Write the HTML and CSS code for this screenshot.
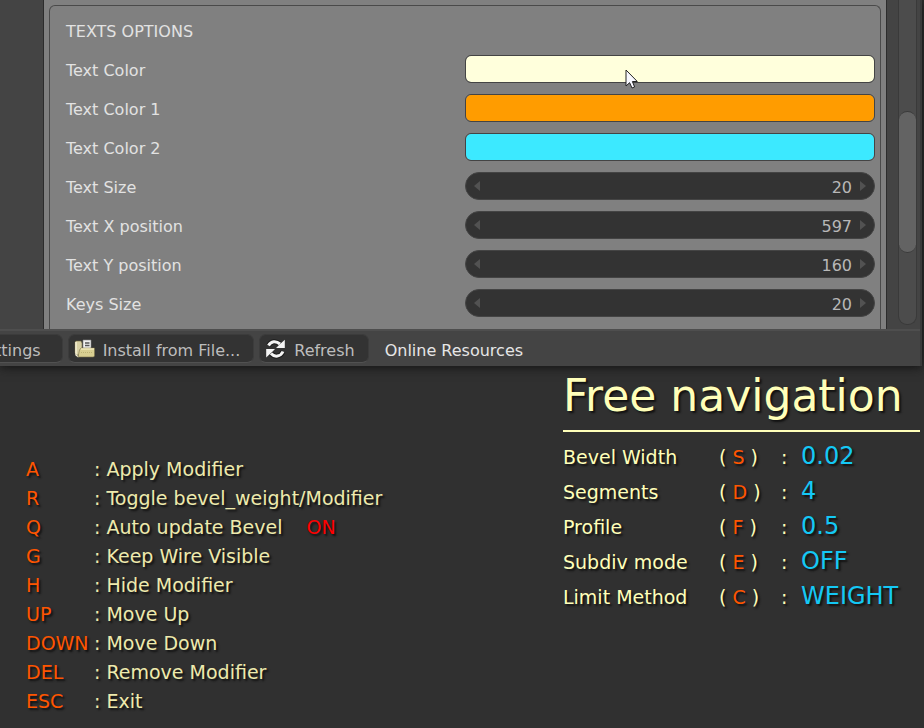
FILE: index.html
```html
<!DOCTYPE html>
<html lang="en">
<head>
<meta charset="UTF-8">
<meta name="viewport" content="width=device-width, initial-scale=1.0">
<title>Texts Options</title>
<link rel="stylesheet" href="styles.css">
</head>
<body>

<div class="window">
    <div class="prefs">
        <div class="panel">
            <form class="options">
                <h2>TEXTS OPTIONS</h2>
                <div class="row">
                    <label for="textColor">Text Color</label>
                    <div class="swatch">
                        <input type="color" id="textColor" value="#ffffdc">
                        <svg class="cursor" width="14" height="21" viewBox="0 0 14 21">
                            <path d="M1 1 V17 L4.600 13.700 L7 19 L9.600 18 L7.400 12.500 H12.300 Z" fill="#f8f8ff" stroke="#222" stroke-width="1"/>
                        </svg>
                    </div>
                </div>
                <div class="row">
                    <label for="textColor1">Text Color 1</label>
                    <div class="swatch"><input type="color" id="textColor1" value="#ff9c00"></div>
                </div>
                <div class="row">
                    <label for="textColor2">Text Color 2</label>
                    <div class="swatch"><input type="color" id="textColor2" value="#3ce9ff"></div>
                </div>
                <div class="row">
                    <label for="textSize">Text Size</label>
                    <div class="number">
                        <button type="button" class="step prev" aria-label="Decrease"></button>
                        <input type="text" id="textSize" value="20">
                        <button type="button" class="step next" aria-label="Increase"></button>
                    </div>
                </div>
                <div class="row">
                    <label for="textX">Text X position</label>
                    <div class="number">
                        <button type="button" class="step prev" aria-label="Decrease"></button>
                        <input type="text" id="textX" value="597">
                        <button type="button" class="step next" aria-label="Increase"></button>
                    </div>
                </div>
                <div class="row">
                    <label for="textY">Text Y position</label>
                    <div class="number">
                        <button type="button" class="step prev" aria-label="Decrease"></button>
                        <input type="text" id="textY" value="160">
                        <button type="button" class="step next" aria-label="Increase"></button>
                    </div>
                </div>
                <div class="row">
                    <label for="keysSize">Keys Size</label>
                    <div class="number">
                        <button type="button" class="step prev" aria-label="Decrease"></button>
                        <input type="text" id="keysSize" value="20">
                        <button type="button" class="step next" aria-label="Increase"></button>
                    </div>
                </div>
            </form>
        </div>
        <div class="scrollbar"><div class="thumb"></div></div>
    </div>

    <div class="toolbar">
        <button type="button" class="btn btn-cut"><span>ttings</span></button>
        <button type="button" class="btn">
            <svg width="22" height="20" viewBox="0 0 22 20">
                <path d="M1 3 L2 2 H7 L8 4 V16 H3 L1 14 Z" fill="#d8d0a4" stroke="#6b6340" stroke-width="0.600"/>
                <path d="M9 1 H17 V12 H9 Z" fill="#f0f0f0" stroke="#888" stroke-width="0.600"/>
                <path d="M11 4 H15.500 M11 6.500 H15.500" stroke="#555" stroke-width="1.300"/>
                <path d="M2 3 V16 L4.500 18" fill="none" stroke="#f7f3d8" stroke-width="1.400"/>
                <path d="M5.500 11 L7 9 H20.500 V17 L19.500 18 H4 Z" fill="#d9cf92" stroke="#79704a" stroke-width="0.600"/>
                <path d="M7 10 H20" stroke="#f5efc4" stroke-width="1.200"/>
                <path d="M7 13.500 H19" stroke="#bcb274" stroke-width="1" stroke-dasharray="1 1"/>
            </svg>
            <span>Install from File...</span>
        </button>
        <button type="button" class="btn">
            <svg width="22" height="20" viewBox="0 0 22 20">
                <g fill="none" stroke="#1c1c1c" stroke-width="5">
                    <path d="M3.500 6.500 C6 2 11 1.500 15 5"/>
                    <path d="M18 12.500 C15.500 18 9.500 18.500 6 14.500"/>
                </g>
                <g fill="none" stroke="#f4f4f4" stroke-width="3">
                    <path d="M3.500 6.500 C6 2 11 1.500 15 5"/>
                    <path d="M18 12.500 C15.500 18 9.500 18.500 6 14.500"/>
                </g>
                <path d="M19.800 0.800 V9 H11 L14 6 Z M1.200 18.500 V10 H10 L7 13 Z" fill="#f4f4f4"/>
            </svg>
            <span>Refresh</span>
        </button>
        <a href="#" class="link">Online Resources</a>
    </div>
</div>

<div class="hud">
    <ul class="keys">
        <li><kbd>A</kbd><span>: Apply Modifier</span></li>
        <li><kbd>R</kbd><span>: Toggle bevel_weight/Modifier</span></li>
        <li><kbd>Q</kbd><span>: Auto update Bevel</span><span class="on">ON</span></li>
        <li><kbd>G</kbd><span>: Keep Wire Visible</span></li>
        <li><kbd>H</kbd><span>: Hide Modifier</span></li>
        <li><kbd>UP</kbd><span>: Move Up</span></li>
        <li><kbd>DOWN</kbd><span>: Move Down</span></li>
        <li><kbd>DEL</kbd><span>: Remove Modifier</span></li>
        <li><kbd>ESC</kbd><span>: Exit</span></li>
    </ul>

    <div class="status">
        <h1>Free navigation</h1>
        <ul class="values">
            <li><span>Bevel Width</span><span>( <kbd>S</kbd> )</span><span>:</span><b>0.02</b></li>
            <li><span>Segments</span><span>( <kbd>D</kbd> )</span><span>:</span><b>4</b></li>
            <li><span>Profile</span><span>( <kbd>F</kbd> )</span><span>:</span><b>0.5</b></li>
            <li><span>Subdiv mode</span><span>( <kbd>E</kbd> )</span><span>:</span><b>OFF</b></li>
            <li><span>Limit Method</span><span>( <kbd>C</kbd> )</span><span>:</span><b>WEIGHT</b></li>
        </ul>
    </div>
</div>

</body>
</html>
```
FILE: styles.css
```css
* {
    box-sizing: border-box;
}
body {
    display: flex;
    flex-direction: column;
    min-height: 100vh;
    margin: 0;
    background-color: #303030;
    font-family: "DejaVu Sans", sans-serif;
    font-size: 16px;
    overflow: hidden;
}
button,
input {
    font: inherit;
    margin: 0;
    padding: 0;
    border: 0;
    background: none;
}
ul {
    list-style: none;
    margin: 0;
    padding: 0;
}
kbd {
    font: inherit;
    color: #ff5500;
}

/* preferences window */
.window {
    margin-right: 2px;
    background-color: #444;
    border-right: 2px solid #3a3a3a;
    box-shadow: 0 1px 10px #111;
}
.prefs {
    display: flex;
    padding: 0 3px 0 43px;
}
.panel {
    flex: 1;
    padding: 5px 5px 0;
    background-color: #808080;
    border-left: 1px solid #2c2c2c;
    border-right: 1px solid #2c2c2c;
}
.options {
    display: flex;
    flex-direction: column;
    gap: 11px;
    padding: 10px 5px 12px;
    border: 1px solid #4a4a4a;
    border-bottom: 0;
    border-radius: 6px 6px 0 0;
}
.options h2,
.options label {
    margin: 0;
    padding-left: 11px;
    font-size: 16px;
    font-weight: normal;
    line-height: 32px;
    height: 28px;
    color: #e2e2e2;
}
.row {
    display: grid;
    grid-template-columns: 1fr 1fr;
}
.swatch {
    position: relative;
    height: 28px;
}
.swatch input {
    display: block;
    width: 100%;
    height: 28px;
    appearance: none;
    border: 1px solid #444;
    border-radius: 6px;
    overflow: hidden;
}
.swatch input::-webkit-color-swatch-wrapper {
    padding: 0;
}
.swatch input::-webkit-color-swatch {
    border: 0;
    border-radius: 5px;
}
.cursor {
    position: absolute;
    top: 14px;
    left: 39%;
}
.number {
    display: flex;
    align-items: center;
    height: 28px;
    padding: 0 8px;
    background-color: #333;
    border: 1px solid #444;
    border-radius: 14px;
}
.number input {
    flex: 1;
    min-width: 0;
    padding-right: 8px;
    height: 26px;
    padding-top: 3px;
    text-align: right;
    color: #b8b8b8;
}
.step {
    width: 6px;
    height: 10px;
    background-color: #525252;
}
.prev {
    clip-path: polygon(100% 0, 100% 100%, 0 50%);
}
.next {
    clip-path: polygon(0 0, 100% 50%, 0 100%);
}
.scrollbar {
    width: 19px;
    margin: 0 0 4px 11px;
    padding-top: 111px;
    background-color: #4c4c4c;
    border: 1px solid #3a3a3a;
    border-top: 0;
    border-radius: 0 0 9px 9px;
}
.thumb {
    height: 142px;
    background-color: #636363;
    border: 1px solid #3a3a3a;
    border-width: 1px 0;
    border-radius: 9px;
}

/* toolbar */
.toolbar {
    display: flex;
    align-items: center;
    gap: 5px;
    height: 37px;
    border-top: 2px solid #4e4e4e;
}
.btn {
    display: flex;
    align-items: center;
    gap: 7px;
    height: 29px;
    padding: 0 13px 0 5px;
    background-color: #333;
    border: 1px solid #3c3c3c;
    border-bottom-color: #515151;
    border-radius: 7px;
    color: #bdbdbd;
    white-space: nowrap;
}
.btn span,
.link {
    padding-top: 4px;
}
.btn-cut {
    margin-left: -11px;
    padding-right: 21px;
}
.link {
    padding-left: 11px;
    color: #e6e6e6;
    text-decoration: none;
}

/* viewport overlay */
.hud {
    position: relative;
    flex: 1;
    display: grid;
    grid-template-columns: 1fr 357px;
    padding: 0 4px 12px 26px;
    font-size: 19px;
    color: #ffffb9;
    text-shadow: 2px 2px 2px #111;
}
.keys {
    align-self: end;
    color: #eeeaad;
}
.keys li {
    display: flex;
    line-height: 29px;
}
.keys kbd {
    width: 68px;
}
.on {
    margin-left: 24px;
    color: #f00;
}
.status h1 {
    margin: 0 0 8px;
    height: 66px;
    border-bottom: 2px solid #ffffb9;
    font-size: 44px;
    font-weight: normal;
    line-height: 60px;
    white-space: nowrap;
}
.values li {
    display: grid;
    grid-template-columns: 156px 62px 20px 1fr;
    align-items: baseline;
    line-height: 35px;
}
.values b {
    font-size: 24px;
    font-weight: normal;
    line-height: 24px;
    color: #14c8f5;
}
```
